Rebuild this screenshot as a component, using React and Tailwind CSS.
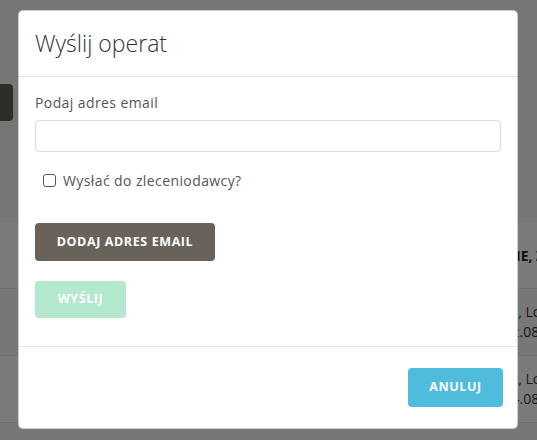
export default function App() {
  const rows = [
    { id: 1, addr: "Zgierz, Lodowa 5", date: "dn. 12.08.2021" },
    { id: 2, addr: "Zgierz, Lodowa 7", date: "dn. 14.08.2021" },
  ];

  return (
    <div className="relative h-[440px] w-[537px] overflow-hidden bg-white font-['Open_Sans',sans-serif]">
      {/* strona pod spodem */}
      <div className="flex h-[222px] flex-col bg-[#eeedeb]">
        <div className="mt-[84px] h-[37px] w-[13px] rounded-r-[4px] bg-[#5e5a54]" />
      </div>
      <div className="flex h-[66px] items-center bg-[#f7f7f7] pl-[464px] text-[14px] font-bold whitespace-nowrap text-[#222]">
        ZLECENIE, ZAKRES
      </div>
      {rows.map((row, i) => (
        <div
          key={row.id}
          className={`flex h-[67px] flex-col justify-center border-t border-[#dcdcdc] pl-[479px] text-[14px] leading-[20px] whitespace-nowrap text-[#333] ${i % 2 === 0 ? "bg-[#efefef]" : "bg-[#f7f7f7]"}`}
        >
          <div>{row.addr}</div>
          <div>{row.date}</div>
        </div>
      ))}
      <div className="h-[30px] border-t border-[#dcdcdc] bg-[#efefef]" />

      {/* tło modala */}
      <div className="absolute inset-0 bg-black/50" />

      {/* modal */}
      <div className="absolute top-[10px] left-[18px] flex w-[500px] flex-col rounded-[5px] border border-black/20 bg-white">
        <div className="flex h-[66px] items-center border-b border-[#e5e5e5] px-4">
          <h5 className="text-[23px] font-light text-[#333]">Wyślij operat</h5>
        </div>

        <div className="flex flex-col px-4 pt-[15px] pb-[28px]">
          <label className="text-[14px] leading-[21px] tracking-[0.4px] text-[#555]">Podaj adres email</label>
          <input
            type="email"
            className="mt-[7px] h-[32px] w-full rounded-[4px] border border-[#dcdcdc] px-3 text-[14px] outline-none"
          />
          <div className="mt-[18px] flex h-[21px] items-center pl-2">
            <span className="h-[13px] w-[13px] rounded-[3px] border border-[#555] bg-white" />
            <span className="ml-[7px] text-[14px] leading-[21px] tracking-[0.4px] text-[#555]">
              Wysłać do zleceniodawcy?
            </span>
          </div>
          <button className="mt-[32px] flex h-[38px] w-[180px] items-center justify-center rounded-[4px] bg-[#68625b] text-[12.5px] font-bold tracking-[0.6px] text-white">
            DODAJ ADRES EMAIL
          </button>
          <button className="mt-[20px] flex h-[37px] w-[91px] items-center justify-center rounded-[4px] bg-[#b4e8cf] text-[12.5px] font-bold tracking-[0.6px] text-white">
            WYŚLIJ
          </button>
        </div>

        <div className="flex justify-end border-t border-[#e5e5e5] pt-[21px] pr-[14px] pb-[21px]">
          <button className="flex h-[39px] w-[95px] items-center justify-center rounded-[4px] bg-[#4fbcdb] text-[12.5px] font-bold tracking-[0.6px] text-white">
            ANULUJ
          </button>
        </div>
      </div>
    </div>
  );
}
